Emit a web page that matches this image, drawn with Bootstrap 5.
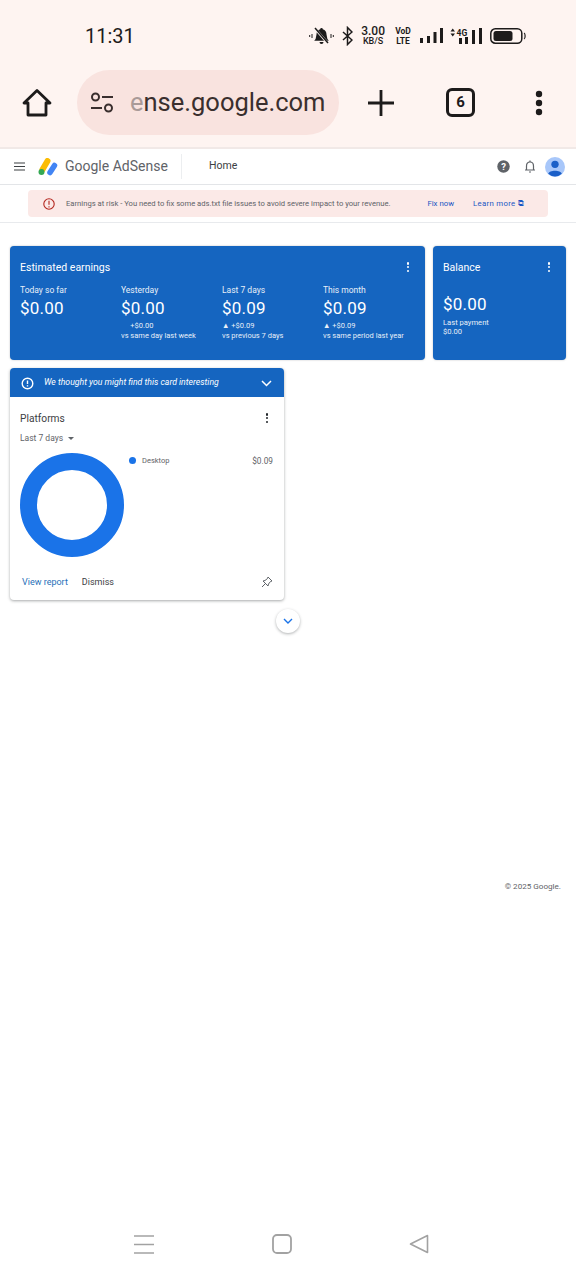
<!DOCTYPE html>
<html lang="en">
<head>
    <meta charset="UTF-8">
    <meta name="viewport" content="width=device-width, initial-scale=1.0">
    <title>Google AdSense</title>
    <link href="https://cdn.jsdelivr.net/npm/bootstrap@5.3.0/dist/css/bootstrap.min.css" rel="stylesheet">
    <style>
        body { font-family: Roboto, "Liberation Sans", sans-serif; background: #fff; color: #3c4043; height: 1280px; overflow: hidden; }
        .chrome-top { height: 149px; background: #fef4f1; border-bottom: 2px solid #f1e9e7; }
        .status-row { height: 70px; padding: 2px 50px 0 85px; color: #1d1b1b; }
        .clock { font-size: 20px; }
        .net-speed { font-size: 12px; line-height: 11px; text-align: center; font-weight: 500; }
        .net-speed span { display: block; font-size: 9px; line-height: 9px; }
        .volte { font-size: 8.5px; line-height: 10px; font-weight: 700; text-align: center; width: 20px; }
        .bars-one { margin-left: -1px; margin-right: -1px; }
        .tool-row { height: 65px; padding: 0 32px 0 22px; }
        .url-pill { width: 262px; height: 65px; margin-left: 25px; margin-right: 28px; padding-left: 13px; background: #f9e3df; border-radius: 33px; font-size: 25.5px; color: #3a2f2e; overflow: hidden; white-space: nowrap; }
        .url-fade { color: #a99a98; }
        .pill-icon { margin-right: 16px; flex: none; }
        .tabs-box { width: 29px; height: 29px; margin-left: 51px; margin-right: 60px; border: 3px solid #1d1b1b; border-radius: 6px; font-size: 15px; font-weight: 700; color: #1d1b1b; }
        .app-bar { height: 36px; padding: 0 11px 0 14px; border-bottom: 1px solid #e3e5e8; }
        .brand-mark { margin-left: 13px; }
        .brand-name { font-size: 14px; color: #5f6368; margin-left: 7px; width: 116px; white-space: nowrap; }
        .app-sep { width: 1px; height: 25px; background: #eceef0; }
        .page-name { font-size: 10.5px; color: #3c4043; margin-left: 27px; margin-bottom: 2px; }
        .bell-icon { margin: 0 9px 0 14px; }
        .banner-row { height: 38px; padding: 5px 28px; border-bottom: 1px solid #e8eaed; }
        .risk-banner { height: 27px; background: #fbe9e7; border-radius: 4px; padding: 0 24px 0 15px; font-size: 7.65px; color: #5f6368; white-space: nowrap; }
        .risk-icon { margin-right: 11px; flex: none; }
        .risk-banner a { color: #1a56c4; text-decoration: none; font-size: 7.8px; }
        .risk-banner a.learn-link { margin-left: 19px; letter-spacing: .3px; }
        .content-area { padding: 23px 10px 0; }
        .blue-card { background: #1565c0; color: #fff; border-radius: 4px; height: 114px; box-shadow: 0 0 2px rgba(60,64,67,.35); }
        .earn-card { width: 415px; padding: 15px 10px 0; }
        .balance-card { width: 133px; margin-left: 8px; padding: 15px 10px 0; }
        .blue-title { font-size: 10.5px; line-height: 14px; }
        .stat-cell { width: 101px; flex: none; }
        .stat-label { font-size: 8.5px; line-height: 11px; margin-top: 10px; opacity: .9; }
        .stat-value { font-size: 17px; line-height: 22px; margin-top: 1px; letter-spacing: .2px; }
        .stat-note { font-size: 7.5px; line-height: 10px; margin-top: 2px; opacity: .9; white-space: nowrap; }
        .pay-note { font-size: 7.6px; line-height: 8.5px; margin-top: 4px; opacity: .9; }
        .balance-value { margin-top: 18px; }
        .kebab { width: 3px; flex: none; margin-right: 5px; }
        .kebab i { display: block; width: 2.4px; height: 2.4px; margin-bottom: 1.5px; border-radius: 50%; background: currentColor; }
        .platform-card { width: 274px; margin-top: 8px; border-radius: 4px; background: #fff; box-shadow: 0 1px 3px rgba(60,64,67,.45); overflow: hidden; }
        .hint-bar { height: 29px; background: #1565c0; color: #fff; padding: 1px 12px 0 11px; font-size: 8.7px; font-style: italic; }
        .hint-icon { margin-right: 10px; flex: none; }
        .platform-body { padding: 15px 10px 0; height: 203px; }
        .platform-title { font-size: 10.2px; line-height: 14px; color: #3c4043; }
        .range-pick { font-size: 8.5px; line-height: 11px; margin-top: 7px; color: #5f6368; }
        .range-arrow { display: inline-block; margin-left: 5px; vertical-align: 1px; border: 3px solid transparent; border-top-color: #5f6368; border-bottom: 0; }
        .ring { width: 104px; height: 104px; margin-top: 9px; flex: none; border-radius: 50%; border: 17px solid #1a73e8; }
        .legend-row { margin: 11px 1px 0 5px; font-size: 7.5px; color: #5f6368; }
        .legend-price { font-size: 8.3px; }
        .legend-dot { width: 7px; height: 7px; margin-right: 6px; border-radius: 50%; background: #1a73e8; }
        .card-actions { margin-top: 19px; padding: 0 1px 0 2px; font-size: 9px; }
        .pin-icon { margin-top: -2px; }
        .view-link { color: #1f6fb8; text-decoration: none; margin-right: 14px; }
        .more-btn { width: 24px; height: 24px; margin: 9px 0 0 266px; border-radius: 50%; background: #fff; box-shadow: 0 1px 3px rgba(60,64,67,.4); }
        .copyright { margin-top: 247px; padding-right: 5px; font-size: 8.1px; color: #5f6368; text-align: right; }
        .nav-keys { height: 60px; margin-top: 322px; padding: 0 147px 0 134px; }
    </style>
</head>
<body>
    <div class="chrome-top">
        <div class="status-row d-flex align-items-center">
            <div class="clock">11:31</div>
            <div class="ms-auto d-flex align-items-center gap-2">
                <svg width="25" height="18" viewBox="0 0 25 18" fill="#1d1b1b"><path d="M12.500 1a1.300 1.300 0 0 1 1.300 1.300c2.600.7 3.700 2.800 3.700 5.200l.9 4.500 1.400 1.800H5.200l1.400-1.800.9-4.500c0-2.400 1.100-4.500 3.700-5.200A1.300 1.300 0 0 1 12.500 1zM10.500 15h4a2 2 0 0 1-4 0z"/><path d="M6 1.500l13 15" stroke="#fef4f1" stroke-width="2.600"/><path d="M6 1l13 15" stroke="#1d1b1b" stroke-width="1.500"/><path d="M3 7v4M0.700 8v2M22 7v4M24.300 8v2" stroke="#1d1b1b" stroke-width="1"/></svg>
                <svg width="11" height="20" viewBox="0 0 11 20" fill="none" stroke="#1d1b1b" stroke-width="1.500"><path d="M1 6l9 8-4.500 4.500v-17L10 6l-9 8"/></svg>
                <div class="net-speed">3.00<span>KB/S</span></div>
                <div class="volte">VoD<br>LTE</div>
                <svg class="bars-one" width="23" height="16" viewBox="0 0 23 16" fill="#1d1b1b"><rect x="0" y="10" width="3" height="5"/><rect x="7" y="8" width="3" height="7"/><rect x="13.500" y="4" width="3" height="11"/><rect x="20" y="0" width="3" height="15"/></svg>
                <svg width="32" height="17" viewBox="0 0 32 17" fill="#1d1b1b"><path d="M0.500 3.500h4.500L2.750 0.500zM0.500 5.500h4.500L2.750 8.500z"/><text x="6.500" y="8" font-size="8.500" font-weight="700" font-family="Roboto">4G</text><rect x="9" y="10" width="3" height="6"/><rect x="15" y="9" width="3" height="7"/><rect x="22" y="2" width="3" height="14"/><rect x="29" y="0" width="3" height="16"/></svg>
                <svg width="36" height="16" viewBox="0 0 36 16"><rect x=".8" y=".8" width="31" height="14.400" rx="4.500" fill="none" stroke="#1d1b1b" stroke-width="1.500"/><rect x="3.500" y="3" width="19" height="10" rx="2.500" fill="#1d1b1b"/><path d="M34 5c1.500.5 1.500 5.500 0 6" fill="none" stroke="#1d1b1b" stroke-width="1.200"/></svg>
            </div>
        </div>
        <div class="tool-row d-flex align-items-center">
            <svg width="30" height="30" viewBox="0 0 30 30" fill="none" stroke="#1d1b1b" stroke-width="2.800" stroke-linejoin="round"><path d="M2 15L15 2.500 28 15h-4v12H6V15z"/></svg>
            <div class="url-pill d-flex align-items-center">
                <svg class="pill-icon" width="24" height="22" viewBox="0 0 24 22" fill="none" stroke="#3a2f2e" stroke-width="2"><circle cx="5.500" cy="5" r="3.500"/><path d="M12 5h11M1 16h11"/><circle cx="18.500" cy="16" r="3.500"/></svg>
                <div><span class="url-fade">e</span>nse.google.com</div>
            </div>
            <svg width="28" height="28" viewBox="0 0 28 28" stroke="#1d1b1b" stroke-width="2.800"><path d="M14 1v26M1 14h26"/></svg>
            <div class="tabs-box d-flex align-items-center justify-content-center">6</div>
            <svg width="8" height="26" viewBox="0 0 8 26" fill="#1d1b1b"><circle cx="4" cy="4" r="3.200"/><circle cx="4" cy="13" r="3.200"/><circle cx="4" cy="22" r="3.200"/></svg>
        </div>
    </div>

    <div class="app-bar d-flex align-items-center">
        <svg width="11" height="9" viewBox="0 0 11 9" stroke="#3c4043" stroke-width="1.200"><path d="M0 1h11M0 4.500h11M0 8h11"/></svg>
        <svg class="brand-mark" width="20" height="18" viewBox="0 0 20 18"><path d="M9.500 3L4.500 11.500" stroke="#fbbc04" stroke-width="6" stroke-linecap="round"/><circle cx="3.500" cy="14" r="3" fill="#34a853"/><path d="M16.500 7.500l-4.500 7" stroke="#4285f4" stroke-width="5.500" stroke-linecap="round"/></svg>
        <div class="brand-name">Google AdSense</div>
        <div class="app-sep"></div>
        <div class="page-name">Home</div>
        <svg class="ms-auto" width="13" height="13" viewBox="0 0 13 13"><circle cx="6.500" cy="6.500" r="6.200" fill="#5f6368"/><text x="6.500" y="10" font-size="9.500" font-weight="700" text-anchor="middle" fill="#fff" font-family="Roboto">?</text></svg>
        <svg class="bell-icon" width="12" height="13" viewBox="0 0 12 13" fill="none" stroke="#5f6368" stroke-width="1.200"><path d="M2.500 10V6c0-2.500 1.200-4 3.500-4s3.500 1.500 3.500 4v4zM1 10h10"/><path d="M5 12h2M6 .5v1.500"/></svg>
        <svg width="20" height="20" viewBox="0 0 19 19"><circle cx="9.500" cy="9.500" r="9.500" fill="#a8c7fa"/><circle cx="9.500" cy="7" r="3.500" fill="#1a5fc8"/><path d="M3 16c1-4 12-4 13 0a9.500 9.500 0 0 1-13 0z" fill="#1a5fc8"/></svg>
    </div>

    <div class="banner-row">
        <div class="risk-banner d-flex align-items-center">
            <svg class="risk-icon" width="12" height="12" viewBox="0 0 12 12" fill="none" stroke="#b3261e" stroke-width="1.100"><circle cx="6" cy="6" r="5.200"/><path d="M6 2.800v4M6 8.200v1.200"/></svg>
            <div>Earnings at risk - You need to fix some ads.txt file issues to avoid severe impact to your revenue.</div>
            <a class="ms-auto" href="#">Fix now</a>
            <a class="learn-link" href="#">Learn more ⧉</a>
        </div>
    </div>

    <div class="content-area">
        <div class="d-flex">
            <div class="blue-card earn-card">
                <div class="d-flex justify-content-between align-items-center">
                    <div class="blue-title">Estimated earnings</div>
                    <div class="kebab"><i></i><i></i><i></i></div>
                </div>
                <div class="d-flex">
                    <div class="stat-cell">
                        <div class="stat-label">Today so far</div>
                        <div class="stat-value">$0.00</div>
                    </div>
                    <div class="stat-cell">
                        <div class="stat-label">Yesterday</div>
                        <div class="stat-value">$0.00</div>
                        <div class="stat-note">&nbsp;&nbsp;&nbsp;&nbsp;&nbsp;+$0.00<br>vs same day last week</div>
                    </div>
                    <div class="stat-cell">
                        <div class="stat-label">Last 7 days</div>
                        <div class="stat-value">$0.09</div>
                        <div class="stat-note">▲ +$0.09<br>vs previous 7 days</div>
                    </div>
                    <div class="stat-cell">
                        <div class="stat-label">This month</div>
                        <div class="stat-value">$0.09</div>
                        <div class="stat-note">▲ +$0.09<br>vs same period last year</div>
                    </div>
                </div>
            </div>
            <div class="blue-card balance-card">
                <div class="d-flex justify-content-between align-items-center">
                    <div class="blue-title">Balance</div>
                    <div class="kebab"><i></i><i></i><i></i></div>
                </div>
                <div class="stat-value balance-value">$0.00</div>
                <div class="pay-note">Last payment<br>$0.00</div>
            </div>
        </div>

        <div class="platform-card">
            <div class="hint-bar d-flex align-items-center">
                <svg class="hint-icon" width="13" height="13" viewBox="0 0 13 13" fill="none" stroke="#fff" stroke-width="1.400"><circle cx="6.500" cy="6.500" r="5.300"/><path d="M6.500 3.500v3.500M6.500 8.300v1.200"/></svg>
                <div>We thought you might find this card interesting</div>
                <svg class="ms-auto" width="11" height="7" viewBox="0 0 11 7" fill="none" stroke="#fff" stroke-width="1.500"><path d="M1 1l4.500 4.500L10 1"/></svg>
            </div>
            <div class="platform-body">
                <div class="d-flex justify-content-between align-items-center">
                    <div class="platform-title">Platforms</div>
                    <div class="kebab text-dark"><i></i><i></i><i></i></div>
                </div>
                <div class="range-pick">Last 7 days<span class="range-arrow"></span></div>
                <div class="d-flex">
                    <div class="ring"></div>
                    <div class="flex-grow-1 d-flex legend-row justify-content-between align-items-start">
                        <div class="d-flex align-items-center"><div class="legend-dot"></div>Desktop</div>
                        <div class="legend-price">$0.09</div>
                    </div>
                </div>
                <div class="card-actions d-flex align-items-center">
                    <a class="view-link" href="#">View report</a>
                    <div>Dismiss</div>
                    <svg class="pin-icon ms-auto" width="12" height="12" viewBox="0 0 12 12" fill="none" stroke="#5f6368" stroke-width="1"><path d="M7 1l4 4-1.500.5L7.500 8 7 10 2 5l2-.5 2.500-2zM4.500 7.500L1 11"/></svg>
                </div>
            </div>
        </div>

        <div class="more-btn d-flex align-items-center justify-content-center">
            <svg width="10" height="6" viewBox="0 0 10 6" fill="none" stroke="#1a73e8" stroke-width="1.400"><path d="M1 1l4 4 4-4"/></svg>
        </div>
        <div class="copyright">© 2025 Google.</div>
    </div>

    <div class="nav-keys d-flex align-items-center justify-content-between">
        <svg width="21" height="21" viewBox="0 0 21 21" stroke="#a2a2a2" stroke-width="1.600"><path d="M0 2h20M0 10.500h20M0 19h20"/></svg>
        <svg width="20" height="20" viewBox="0 0 20 20" fill="none" stroke="#a2a2a2" stroke-width="1.800"><rect x="1" y="1" width="18" height="18" rx="4"/></svg>
        <svg width="20" height="20" viewBox="0 0 20 20" fill="none" stroke="#a2a2a2" stroke-width="1.600" stroke-linejoin="round"><path d="M18.500 1.500v17L1.500 10z"/></svg>
    </div>
    <script src="https://cdn.jsdelivr.net/npm/bootstrap@5.3.0/dist/js/bootstrap.bundle.min.js"></script>
</body>
</html>
